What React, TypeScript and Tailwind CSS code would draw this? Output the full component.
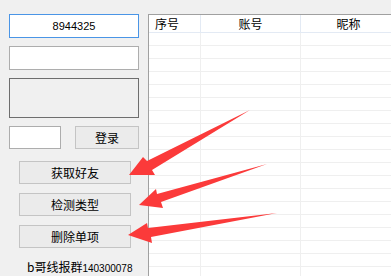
import React from 'react';

const font = { fontFamily: '"Noto Sans CJK SC", "Liberation Sans", sans-serif' };

function WinButton({ label, className = '' }: { label: string; className?: string }) {
  return (
    <div
      className={`flex items-center justify-center border border-[#c4c4c4] bg-[#ebebeb] text-[12px] leading-none text-black ${className}`}
    >
      {label}
    </div>
  );
}

const rows = Array.from({ length: 19 });

export default function App() {
  return (
    <div className="relative flex h-[276px] w-[391px] overflow-hidden bg-[#f0f0f0]" style={font}>
      {/* left panel */}
      <div className="flex w-[148px] shrink-0 flex-col pl-[9px] pt-[14px]">
        <div className="flex h-[24px] w-[130px] items-center justify-center border border-[#4a95e6] bg-white font-['Liberation_Sans'] text-[11px] text-black">
          8944325
        </div>
        <div className="mt-[8px] h-[24px] w-[130px] border border-[#adadad] bg-white" />
        <div className="mt-[8px] h-[40px] w-[130px] border border-[#6e6e6e] bg-[#f0f0f0]" />
        <div className="mt-[8px] flex h-[23px] w-[130px] items-center justify-between">
          <div className="h-[23px] w-[52px] border border-[#adadad] bg-white" />
          <WinButton label="登录" className="h-[23px] w-[64px]" />
        </div>
        <div className="ml-[10px] mt-[12px] flex flex-col gap-[9px]">
          <WinButton label="获取好友" className="h-[23px] w-[112px]" />
          <WinButton label="检测类型" className="h-[23px] w-[112px]" />
          <WinButton label="删除单项" className="h-[23px] w-[112px]" />
        </div>
        <div className="ml-[18px] mt-[13px] whitespace-nowrap text-[12px] leading-none text-black">
          b哥线报群<span className="font-['Liberation_Sans'] text-[10px]">140300078</span>
        </div>
      </div>

      {/* list view */}
      <div className="mt-[14px] flex-1 border-l border-t border-[#a0a0a0] bg-white">
        <div className="flex h-[18px] border-b border-[#e3eaf4] text-[12px] leading-none text-black">
          <div className="flex w-[52px] items-center border-r border-[#e3eaf4] pl-[6px]">序号</div>
          <div className="flex w-[100px] items-center justify-center border-r border-[#e3eaf4]">账号</div>
          <div className="flex flex-1 items-center justify-center pl-[5px]">昵称</div>
        </div>
        {rows.map((_, i) => (
          <div key={i} className="flex h-[13px] border-b border-[#efefef]">
            <div className="w-[52px] border-r border-[#efefef]" />
            <div className="w-[100px] border-r border-[#efefef]" />
            <div className="flex-1" />
          </div>
        ))}
      </div>

      {/* red annotation arrows */}
      <svg className="pointer-events-none absolute left-0 top-0" width="391" height="276" viewBox="0 0 391 276">
        <polygon points="250,110 147,161 143,157 129,175 155,175 152,170" fill="#fb3a3a" />
        <polygon points="267,164 157,194 156,189 139,205 163,208 161,202" fill="#fb3a3a" />
        <polygon points="277,213 148,228 147,223 128,235 152,243 151,237" fill="#fb3a3a" />
      </svg>
    </div>
  );
}
